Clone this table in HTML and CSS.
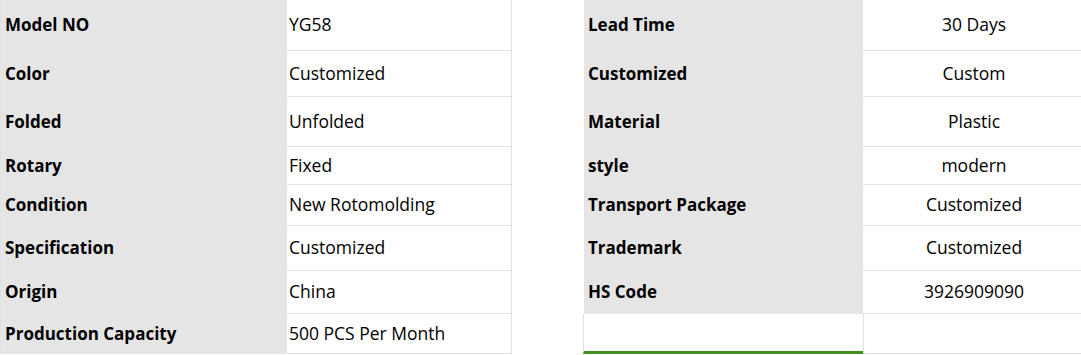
FILE: index.html
```html
<!DOCTYPE html>
<html lang="en">
<head>
<meta charset="utf-8">
<title>Product Specifications</title>
<link rel="stylesheet" href="styles.css">
</head>
<body>
<div class="specs">
  <div class="spec-table spec-left">
    <div class="cell label">Model NO</div><div class="cell value">YG58</div>
    <div class="cell label">Color</div><div class="cell value">Customized</div>
    <div class="cell label">Folded</div><div class="cell value">Unfolded</div>
    <div class="cell label">Rotary</div><div class="cell value">Fixed</div>
    <div class="cell label">Condition</div><div class="cell value">New Rotomolding</div>
    <div class="cell label">Specification</div><div class="cell value">Customized</div>
    <div class="cell label">Origin</div><div class="cell value">China</div>
    <div class="cell label">Production Capacity</div><div class="cell value">500 PCS Per Month</div>
  </div>
  <div class="spec-table spec-right">
    <div class="cell label">Lead Time</div><div class="cell value">30 Days</div>
    <div class="cell label">Customized</div><div class="cell value">Custom</div>
    <div class="cell label">Material</div><div class="cell value">Plastic</div>
    <div class="cell label">style</div><div class="cell value">modern</div>
    <div class="cell label">Transport Package</div><div class="cell value">Customized</div>
    <div class="cell label">Trademark</div><div class="cell value">Customized</div>
    <div class="cell label">HS Code</div><div class="cell value">3926909090</div>
    <div class="cell label empty"></div><div class="cell value empty"></div>
  </div>
</div>
</body>
</html>
```

FILE: styles.css
```css
* {
  box-sizing: border-box;
}

html, body {
  margin: 0;
  background: #fff;
  overflow: hidden;
}

body {
  font-family: "Open Sans", "Noto Sans", Arial, sans-serif;
  font-size: 17px;
  color: #000;
}

.specs {
  display: flex;
  align-items: flex-start;
  gap: 72px;
}

.spec-table {
  display: grid;
  grid-template-rows: 51px 46px 50px 38px 41px 45px 43px 40px;
}

.spec-left {
  grid-template-columns: 286px 225px;
  border-left: 1px solid #e2e2e2;
}

.spec-right {
  grid-template-columns: 279px 222px;
}

.cell {
  display: flex;
  align-items: center;
  white-space: nowrap;
  padding-bottom: 2px;
}

.label {
  background: #e5e5e5;
  font-weight: 700;
  padding-left: 4px;
}

.value {
  background: #fff;
  border-bottom: 1px solid #e2e2e2;
  padding-left: 2px;
  font-size: 17.5px;
}

.spec-left .value {
  border-right: 1px solid #e2e2e2;
}

.spec-right .value {
  justify-content: center;
  padding-left: 0;
}

.spec-right .label.empty {
  background: #fff;
  border-left: 1px solid #e2e2e2;
  border-bottom: 3px solid #45901f;
  margin-left: -1px;
}

.spec-right .value.empty {
  border-left: 1px solid #e2e2e2;
}
```
